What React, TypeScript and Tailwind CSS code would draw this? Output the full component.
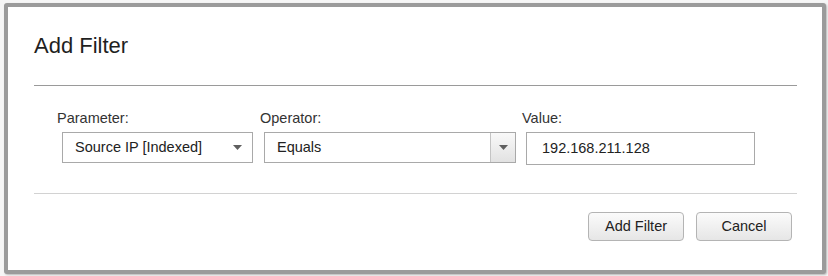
import React from 'react';

const font = { fontFamily: '"Liberation Sans", Arial, sans-serif' };

const Caret = () => (
  <svg width="9" height="5" viewBox="0 0 9 5" className="block">
    <path d="M0 0h9L4.5 5z" fill="#5f5f5f" />
  </svg>
);

export default function App() {
  return (
    <div className="w-[828px] h-[276px] bg-[#f6f6f6] pt-[3px] pl-[4px] text-[#222]" style={font}>
      <div className="w-[822px] h-[271px] bg-white border-[4px] border-[#9b9b9b] rounded-[3px] shadow-[1px_1px_2px_rgba(0,0,0,0.25)] pl-[26px] pr-[25px] pt-[28px]">
        <h1 className="text-[22px] leading-none text-[#1f1f1f]">Add Filter</h1>
        <div className="mt-[28px] h-px bg-[#9a9a9a]" />

        <div className="flex pl-[23px] mt-[25px]">
          {/* Parameter */}
          <div className="w-[203px] flex flex-col">
            <label className="text-[14.5px] leading-none text-[#333]">Parameter:</label>
            <div className="ml-[5px] mt-[6px] w-[191px] h-[31px] border border-[#a9a9a9] flex items-center justify-between pl-[12px] pr-[10px] bg-white">
              <span className="text-[14.5px] leading-none text-[#222]">Source IP [Indexed]</span>
              <Caret />
            </div>
          </div>

          {/* Operator */}
          <div className="w-[262px] flex flex-col">
            <label className="text-[14.5px] leading-none text-[#333]">Operator:</label>
            <div className="ml-[4px] mt-[6px] w-[252px] h-[31px] border border-[#a9a9a9] flex items-stretch bg-white">
              <span className="flex-1 flex items-center pl-[12px] text-[14.5px] leading-none text-[#222]">Equals</span>
              <div className="w-[25px] border-l border-[#c4c4c4] bg-gradient-to-b from-[#f9f9f9] to-[#e2e2e2] flex items-center justify-center">
                <Caret />
              </div>
            </div>
          </div>

          {/* Value */}
          <div className="flex flex-col">
            <label className="text-[14.5px] leading-none text-[#333]">Value:</label>
            <div className="ml-[4px] mt-[6px] w-[229px] h-[33px] border border-[#a9a9a9] flex items-center pl-[15px] bg-white">
              <span className="text-[14.5px] leading-none text-[#222]">192.168.211.128</span>
            </div>
          </div>
        </div>

        <div className="mt-[28px] h-px bg-[#d2d2d2]" />

        <div className="flex justify-end gap-[12px] mt-[18px] pr-[5px]">
          <button className="w-[96px] h-[29px] rounded-[4px] border border-[#b4b4b4] bg-gradient-to-b from-[#fbfbfb] to-[#e6e6e6] text-[14.5px] leading-none text-[#222]">
            Add Filter
          </button>
          <button className="w-[96px] h-[29px] rounded-[4px] border border-[#b4b4b4] bg-gradient-to-b from-[#fbfbfb] to-[#e6e6e6] text-[14.5px] leading-none text-[#222]">
            Cancel
          </button>
        </div>
      </div>
    </div>
  );
}
